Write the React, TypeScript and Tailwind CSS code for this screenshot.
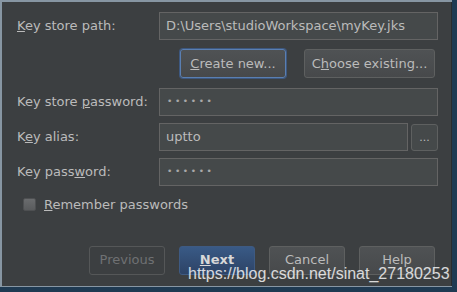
const font = { fontFamily: '"DejaVu Sans", "Noto Sans", sans-serif' };

const Field = ({ children, className = "" }: { children?: React.ReactNode; className?: string }) => (
  <div
    className={`flex h-[28px] items-center border border-[#646464] bg-[#45494a] px-[6px] text-[13px] text-[#bbbbbb] ${className}`}
  >
    {children}
  </div>
);

const Dots = () => (
  <span className="pl-[1px] text-[9px] tracking-[2.6px] text-[#a9a9a9]">••••••</span>
);

const Btn = ({
  children,
  variant = "normal",
  className = "",
}: {
  children: React.ReactNode;
  variant?: "normal" | "focus" | "primary" | "disabled";
  className?: string;
}) => {
  const styles = {
    normal: "border-[#5e6060] bg-gradient-to-b from-[#4f5254] to-[#47494b] text-[#bbbbbb]",
    focus: "border-[#5a7fb2] bg-gradient-to-b from-[#4f5254] to-[#47494b] text-[#bbbbbb] shadow-[0_0_0_1px_#3d5880]",
    primary: "border-[#3e5a82] bg-gradient-to-b from-[#395a86] to-[#2d4366] text-[#d8d8d8]",
    disabled: "border-[#555758] bg-transparent text-[#6f7173]",
  }[variant];
  return (
    <div className={`flex h-[29px] items-center justify-center rounded-[3px] border text-[13px] ${styles} ${className}`}>
      {children}
    </div>
  );
};

const Label = ({ children }: { children: React.ReactNode }) => (
  <div className="w-[142px] shrink-0 text-[13px] text-[#bbbbbb]">{children}</div>
);

export default function App() {
  return (
    <div className="relative h-[292px] w-[457px] overflow-hidden bg-[#1f3a52]" style={font}>
      <div className="h-[287px] w-[452px] border-l-2 border-t-2 border-b border-[#8796a3] bg-[#3c3f41]">
        <div className="h-full border-r border-[#2a2c2d] pl-[15px] pr-[11px] pt-[10px]">
          <div className="flex items-center">
            <Label>
              <u>K</u>ey store path:
            </Label>
            <Field className="w-[279px]">D:\Users\studioWorkspace\myKey.jks</Field>
          </div>

          <div className="mt-[9px] flex justify-end gap-[18px] pr-[5px]">
            <Btn variant="focus" className="w-[106px]">
              <span>
                <u>C</u>reate new...
              </span>
            </Btn>
            <Btn className="w-[131px]">
              <span>
                C<u>h</u>oose existing...
              </span>
            </Btn>
          </div>

          <div className="mt-[10px] flex items-center">
            <Label>
              Key store <u>p</u>assword:
            </Label>
            <Field className="w-[279px]">
              <Dots />
            </Field>
          </div>

          <div className="mt-[7px] flex items-center">
            <Label>
              K<u>e</u>y alias:
            </Label>
            <Field className="h-[27px] w-[249px]">uptto</Field>
            <div className="ml-[3px] flex h-[27px] w-[27px] items-center justify-center rounded-[3px] border border-[#5e6060] bg-[#45494a] text-[11px] leading-none text-[#bbbbbb]">
              ...
            </div>
          </div>

          <div className="mt-[7px] flex items-center">
            <Label>
              Key pass<u>w</u>ord:
            </Label>
            <Field className="w-[279px]">
              <Dots />
            </Field>
          </div>

          <div className="mt-[9px] flex items-center pl-[6px]">
            <div className="h-[13px] w-[13px] rounded-[2px] border border-[#4e5052] bg-gradient-to-b from-[#6a6c6e] to-[#595b5d]" />
            <span className="ml-[8px] text-[13px] text-[#bbbbbb]">
              <u>R</u>emember passwords
            </span>
          </div>

          <div className="mt-[31px] flex gap-[14px] pl-[72px]">
            <Btn variant="disabled" className="w-[76px]">
              Previous
            </Btn>
            <Btn variant="primary" className="w-[76px]">
              <span className="font-semibold">
                <u>N</u>ext
              </span>
            </Btn>
            <Btn className="w-[76px]">Cancel</Btn>
            <Btn className="w-[76px]">Help</Btn>
          </div>
        </div>
      </div>

      <div
        className="absolute left-[188px] top-[262px] text-[16px] text-white/80"
        style={{ fontFamily: '"Liberation Sans", Arial, sans-serif' }}
      >
        https://blog.csdn.net/sinat_27180253
      </div>
    </div>
  );
}
